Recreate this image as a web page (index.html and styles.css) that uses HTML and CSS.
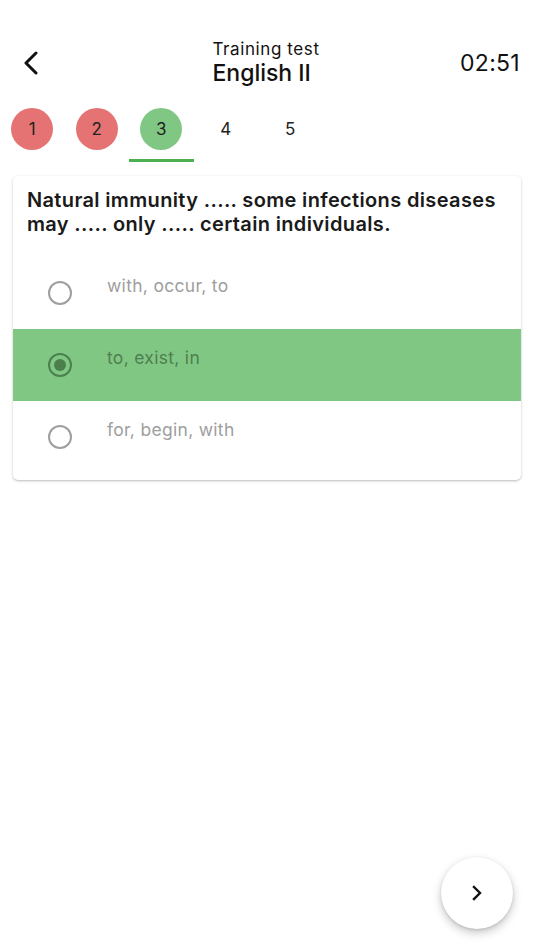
FILE: index.html
```html
<!DOCTYPE html>
<html>
<head>
<meta charset="utf-8">
<link rel="stylesheet" href="styles.css">
</head>
<body>
<div class="app">
  <header class="header">
    <button class="back" aria-label="Back">
      <svg width="24" height="24" viewBox="0 0 24 24"><path d="M17 2 L7 12 L17 22" fill="none" stroke="#111" stroke-width="3" stroke-linecap="round" stroke-linejoin="round"/></svg>
    </button>
    <div class="titles">
      <div class="subtitle">Training test</div>
      <div class="title">English II</div>
    </div>
    <div class="timer">02:51</div>
  </header>
  <nav class="tabs">
    <div class="tab"><span class="dot wrong">1</span></div>
    <div class="tab"><span class="dot wrong">2</span></div>
    <div class="tab active"><span class="dot right">3</span></div>
    <div class="tab"><span class="dot">4</span></div>
    <div class="tab"><span class="dot">5</span></div>
    <div class="tab-fill"></div>
  </nav>
  <section class="card">
    <h2 class="question">Natural immunity ..... some infections diseases may ..... only ..... certain individuals.</h2>
    <div class="option">
      <span class="radio"></span>
      <span class="opt-text">with, occur, to</span>
    </div>
    <div class="option selected">
      <span class="radio checked"></span>
      <span class="opt-text">to, exist, in</span>
    </div>
    <div class="option last">
      <span class="radio"></span>
      <span class="opt-text">for, begin, with</span>
    </div>
  </section>
  <button class="fab" aria-label="Next">
    <svg width="20" height="20" viewBox="0 0 20 20"><path d="M7 4 L13 10 L7 16" fill="none" stroke="#111" stroke-width="2.4" stroke-linecap="square"/></svg>
  </button>
</div>
</body>
</html>
```
FILE: styles.css
```css
* { box-sizing: border-box; }
html, body { margin: 0; padding: 0; background: #fff; }
body { font-family: Inter, "Noto Sans", sans-serif; color: #111; }
.app { position: relative; width: 534px; height: 950px; }
.header {
  display: grid; grid-template-columns: 1fr auto 1fr; align-items: center;
  padding: 30px 14px 0 16px; height: 96px;
}
.back { border: 0; background: none; padding: 0; width: 30px; height: 30px; display: flex; align-items: center; justify-content: center; margin-top: 0; justify-self: start; }
.titles { text-align: left; margin-left: -4px; }
.subtitle { font-size: 17px; line-height: 21px; letter-spacing: 0.6px; }
.title { font-size: 23px; line-height: 27px; font-weight: 500; letter-spacing: 0; }
.timer { font-size: 23px; font-weight: 400; letter-spacing: 0.3px; justify-self: end; margin-top: 0; }
.tabs { display: flex; height: 66px; align-items: stretch; }
.tab {
  width: 64.5px; display: flex; align-items: center; justify-content: center;
  position: relative;
}
.tab.active::after {
  content: ""; position: absolute; left: 0; right: 0; bottom: 0; height: 3px; background: #4caf50;
}
.dot {
  width: 42px; height: 42px; border-radius: 50%; display: flex; align-items: center; justify-content: center;
  font-size: 17px; color: #222;
}
.dot.wrong { background: #e57373; }
.dot.right { background: #81c784; }
.tab-fill { flex: 1; }
.card {
  margin: 14px 13px 0; background: #fff; border-radius: 5px;
  box-shadow: 0 1px 3px rgba(0,0,0,0.22), 0 1px 1px rgba(0,0,0,0.06);
  overflow: hidden;
}
.question {
  margin: 0; padding: 12px 14px 21px; font-size: 20px; line-height: 24px; font-weight: 600; color: #1a1a1a; letter-spacing: 0.35px;
}
.option { display: flex; align-items: flex-start; height: 72px; padding: 0 0 0 35px; }
.option.last { height: 79px; }
.option.selected { background: #81c784; }
.radio {
  width: 24px; height: 24px; border-radius: 50%; border: 2.5px solid #9e9e9e; margin-top: 24px; flex: none;
  display: flex; align-items: center; justify-content: center;
}
.radio.checked { border-color: #4c7f4e; }
.radio.checked::after { content: ""; width: 12px; height: 12px; border-radius: 50%; background: #4c7f4e; }
.opt-text { margin-left: 35px; margin-top: 18px; font-size: 17.5px; line-height: 22px; color: #9e9e9e; letter-spacing: 0.3px; }
.option.selected .opt-text { color: #4f7f50; }
.fab {
  position: absolute; left: 441px; top: 857px; width: 72px; height: 72px; border-radius: 50%;
  border: 0; background: #fff; display: flex; align-items: center; justify-content: center;
  box-shadow: 0 4px 10px rgba(0,0,0,0.22), 0 1px 3px rgba(0,0,0,0.12);
}
```
